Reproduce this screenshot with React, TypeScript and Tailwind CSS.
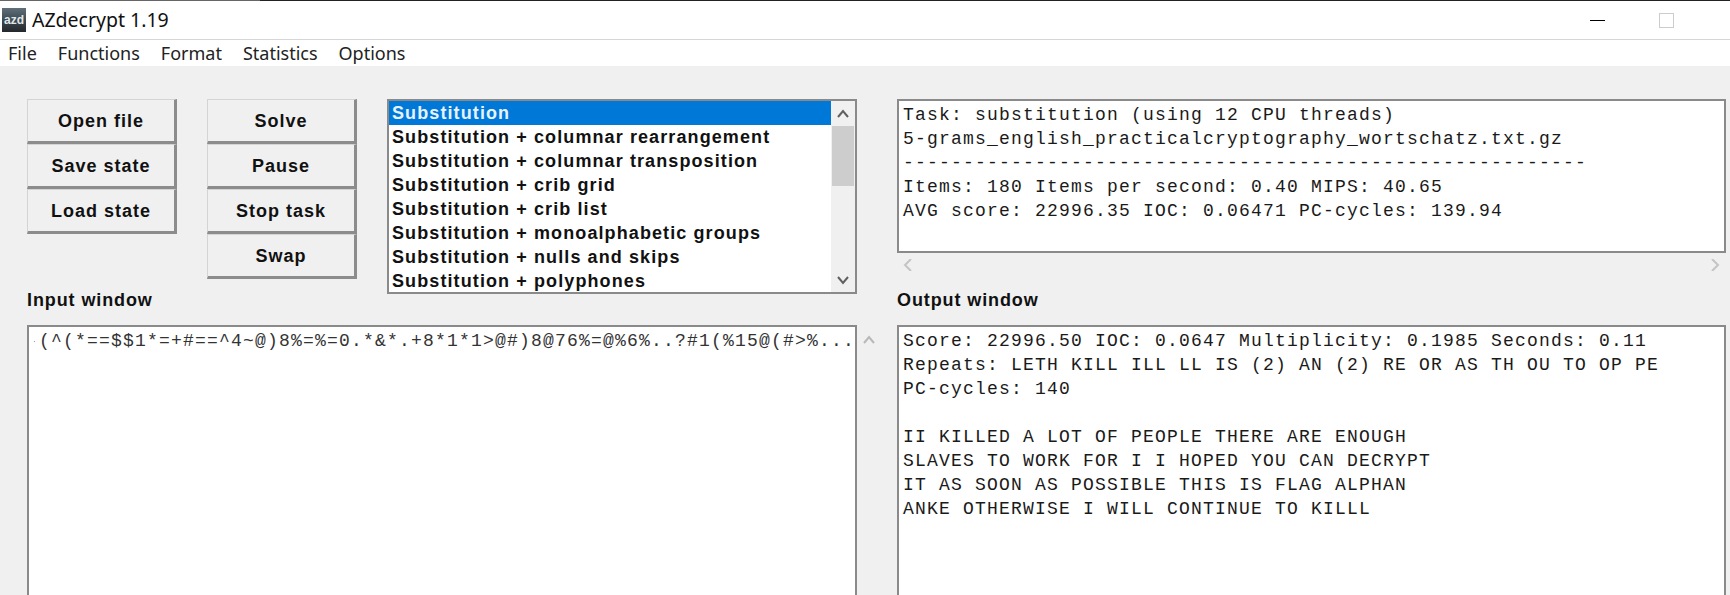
const ui = { fontFamily: '"Liberation Sans", Arial, sans-serif' };
const mono = { fontFamily: '"Liberation Mono", "Courier New", monospace' };
const noto = { fontFamily: '"Noto Sans", sans-serif' };

function Btn({ label }: { label: string }) {
  return (
    <button className="flex h-[45px] w-[150px] items-center justify-center border-t border-l border-t-[#d4d4d4] border-l-[#d4d4d4] border-r-[3px] border-b-[3px] border-r-[#8c8c8c] border-b-[#8c8c8c] bg-[#f0f0f0] pt-[1px] text-[18px] font-bold tracking-[1px] text-[#111]" style={ui}>
      {label}
    </button>
  );
}

function Chevron({ dir, color = "#606060" }: { dir: "up" | "down" | "left" | "right"; color?: string }) {
  const d = {
    up: "M1 8 L6 2 L11 8",
    down: "M1 2 L6 8 L11 2",
    left: "M8 0 L2 6 L8 12",
    right: "M2 0 L8 6 L2 12",
  }[dir];
  const vert = dir === "up" || dir === "down";
  return (
    <svg width={vert ? 12 : 10} height={vert ? 10 : 12} viewBox={vert ? "0 0 12 10" : "0 0 10 12"} fill="none" stroke={color} strokeWidth="2">
      <path d={d} />
    </svg>
  );
}

const rows = [
  "Substitution",
  "Substitution + columnar rearrangement",
  "Substitution + columnar transposition",
  "Substitution + crib grid",
  "Substitution + crib list",
  "Substitution + monoalphabetic groups",
  "Substitution + nulls and skips",
  "Substitution + polyphones",
];

const menu = ["File", "Functions", "Format", "Statistics", "Options"];

const stats = [
  "Task: substitution (using 12 CPU threads)",
  "5-grams_english_practicalcryptography_wortschatz.txt.gz",
  "---------------------------------------------------------",
  "Items: 180 Items per second: 0.40 MIPS: 40.65",
  "AVG score: 22996.35 IOC: 0.06471 PC-cycles: 139.94",
];

const output = [
  "Score: 22996.50 IOC: 0.0647 Multiplicity: 0.1985 Seconds: 0.11",
  "Repeats: LETH KILL ILL LL IS (2) AN (2) RE OR AS TH OU TO OP PE",
  "PC-cycles: 140",
  "\u00a0",
  "II KILLED A LOT OF PEOPLE THERE ARE ENOUGH",
  "SLAVES TO WORK FOR I I HOPED YOU CAN DECRYPT",
  "IT AS SOON AS POSSIBLE THIS IS FLAG ALPHAN",
  "ANKE OTHERWISE I WILL CONTINUE TO KILLL",
];

const monoText = "whitespace-pre text-[18px] leading-[24px] tracking-[1.2px] text-[#1a1a1a]";

export default function App() {
  return (
    <div className="flex h-[595px] w-[1730px] flex-col overflow-hidden bg-[#f0f0f0]">
      <div className="flex h-px shrink-0">
        <div className="h-px w-[260px] bg-[#666]" />
        <div className="h-px flex-1 bg-[#222]" />
      </div>
      <div className="flex h-[39px] shrink-0 items-center border-b border-[#d6d6d6] bg-white pl-[2px]">
        <div className="flex h-[24px] w-[24px] items-center justify-center bg-gradient-to-b from-[#5f6f7a] to-[#23282c] text-[12px] font-bold leading-none text-[#dfe7ea]" style={ui}>
          azd
        </div>
        <span className="ml-[6px] text-[19.5px] text-[#111]" style={noto}>
          AZdecrypt 1.19
        </span>
        <div className="ml-auto mr-[54px] h-px w-[15px] bg-black" />
        <div className="mr-[56px] h-[15px] w-[15px] border border-[#ccc]" />
      </div>
      <div className="flex h-[26px] shrink-0 items-center gap-[21px] bg-white pl-[8px] text-[18px] text-[#222]" style={noto}>
        {menu.map((m) => (
          <span key={m}>{m}</span>
        ))}
      </div>

      <div className="flex flex-1 pl-[27px] pr-[4px] pt-[33px]">
        <div className="flex w-[870px] shrink-0 flex-col">
          <div className="flex h-[226px] w-[830px]">
            <div className="flex flex-col">
              <div className="flex gap-[30px]">
                <div className="flex flex-col">
                  <Btn label="Open file" />
                  <Btn label="Save state" />
                  <Btn label="Load state" />
                </div>
                <div className="flex flex-col">
                  <Btn label="Solve" />
                  <Btn label="Pause" />
                  <Btn label="Stop task" />
                  <Btn label="Swap" />
                </div>
              </div>
              <div className="mt-[9px] text-[18px] font-bold leading-[24px] tracking-[0.9px] text-[#111]" style={ui}>
                Input window
              </div>
            </div>
            <div className="ml-[30px] flex h-[195px] flex-1 self-start overflow-hidden border-2 border-[#8a8a8a] bg-white">
              <div className="flex-1 overflow-hidden">
                {rows.map((r, i) => (
                  <div key={r} className={`h-[24px] whitespace-nowrap pl-[3px] text-[18px] font-bold leading-[25px] tracking-[1.1px] ${i === 0 ? "bg-[#0078d7] text-[#e6f2ff]" : "text-[#111]"}`} style={ui}>
                    {r}
                  </div>
                ))}
              </div>
              <div className="flex w-[24px] shrink-0 flex-col items-center bg-[#f0f0f0]">
                <div className="flex h-[25px] items-center justify-center">
                  <Chevron dir="up" />
                </div>
                <div className="h-[60px] w-[22px] bg-[#cdcdcd]" />
                <div className="mt-auto flex h-[24px] items-center justify-center">
                  <Chevron dir="down" />
                </div>
              </div>
            </div>
          </div>
          <div className="flex flex-1">
            <div className="h-[300px] w-[830px] overflow-hidden border-2 border-[#8a8a8a] bg-white pl-[5px] pt-[2px]">
              <div className="flex items-center whitespace-pre text-[18px] leading-[24px] tracking-[1.2px] text-[#333]" style={mono}>
                <div className="mr-[4px] h-px w-px bg-[#999]" />
                <span>{"(^(*==$$1*=+#==^4~@)8%=%=0.*&*.+8*1*1>@#)8@76%=@%6%..?#1(%15@(#>%..."}</span>
              </div>
            </div>
            <div className="flex w-[24px] justify-center pt-[10px]">
              <Chevron dir="up" color="#b8b8b8" />
            </div>
          </div>
        </div>

        <div className="flex flex-1 flex-col">
          <div className="h-[154px] border-2 border-[#8a8a8a] bg-white pl-[4px] pt-[2px]" style={mono}>
            {stats.map((s) => (
              <div key={s} className={monoText}>{s}</div>
            ))}
          </div>
          <div className="flex h-[24px] items-center justify-between px-[6px]">
            <Chevron dir="left" color="#c4c4c4" />
            <Chevron dir="right" color="#c4c4c4" />
          </div>
          <div className="mt-[11px] text-[18px] font-bold leading-[24px] tracking-[0.9px] text-[#111]" style={ui}>
            Output window
          </div>
          <div className="mt-[13px] h-[300px] overflow-hidden border-2 border-[#8a8a8a] bg-white pl-[4px] pt-[2px]" style={mono}>
            {output.map((s, i) => (
              <div key={i} className={monoText}>{s}</div>
            ))}
          </div>
        </div>
      </div>
    </div>
  );
}
